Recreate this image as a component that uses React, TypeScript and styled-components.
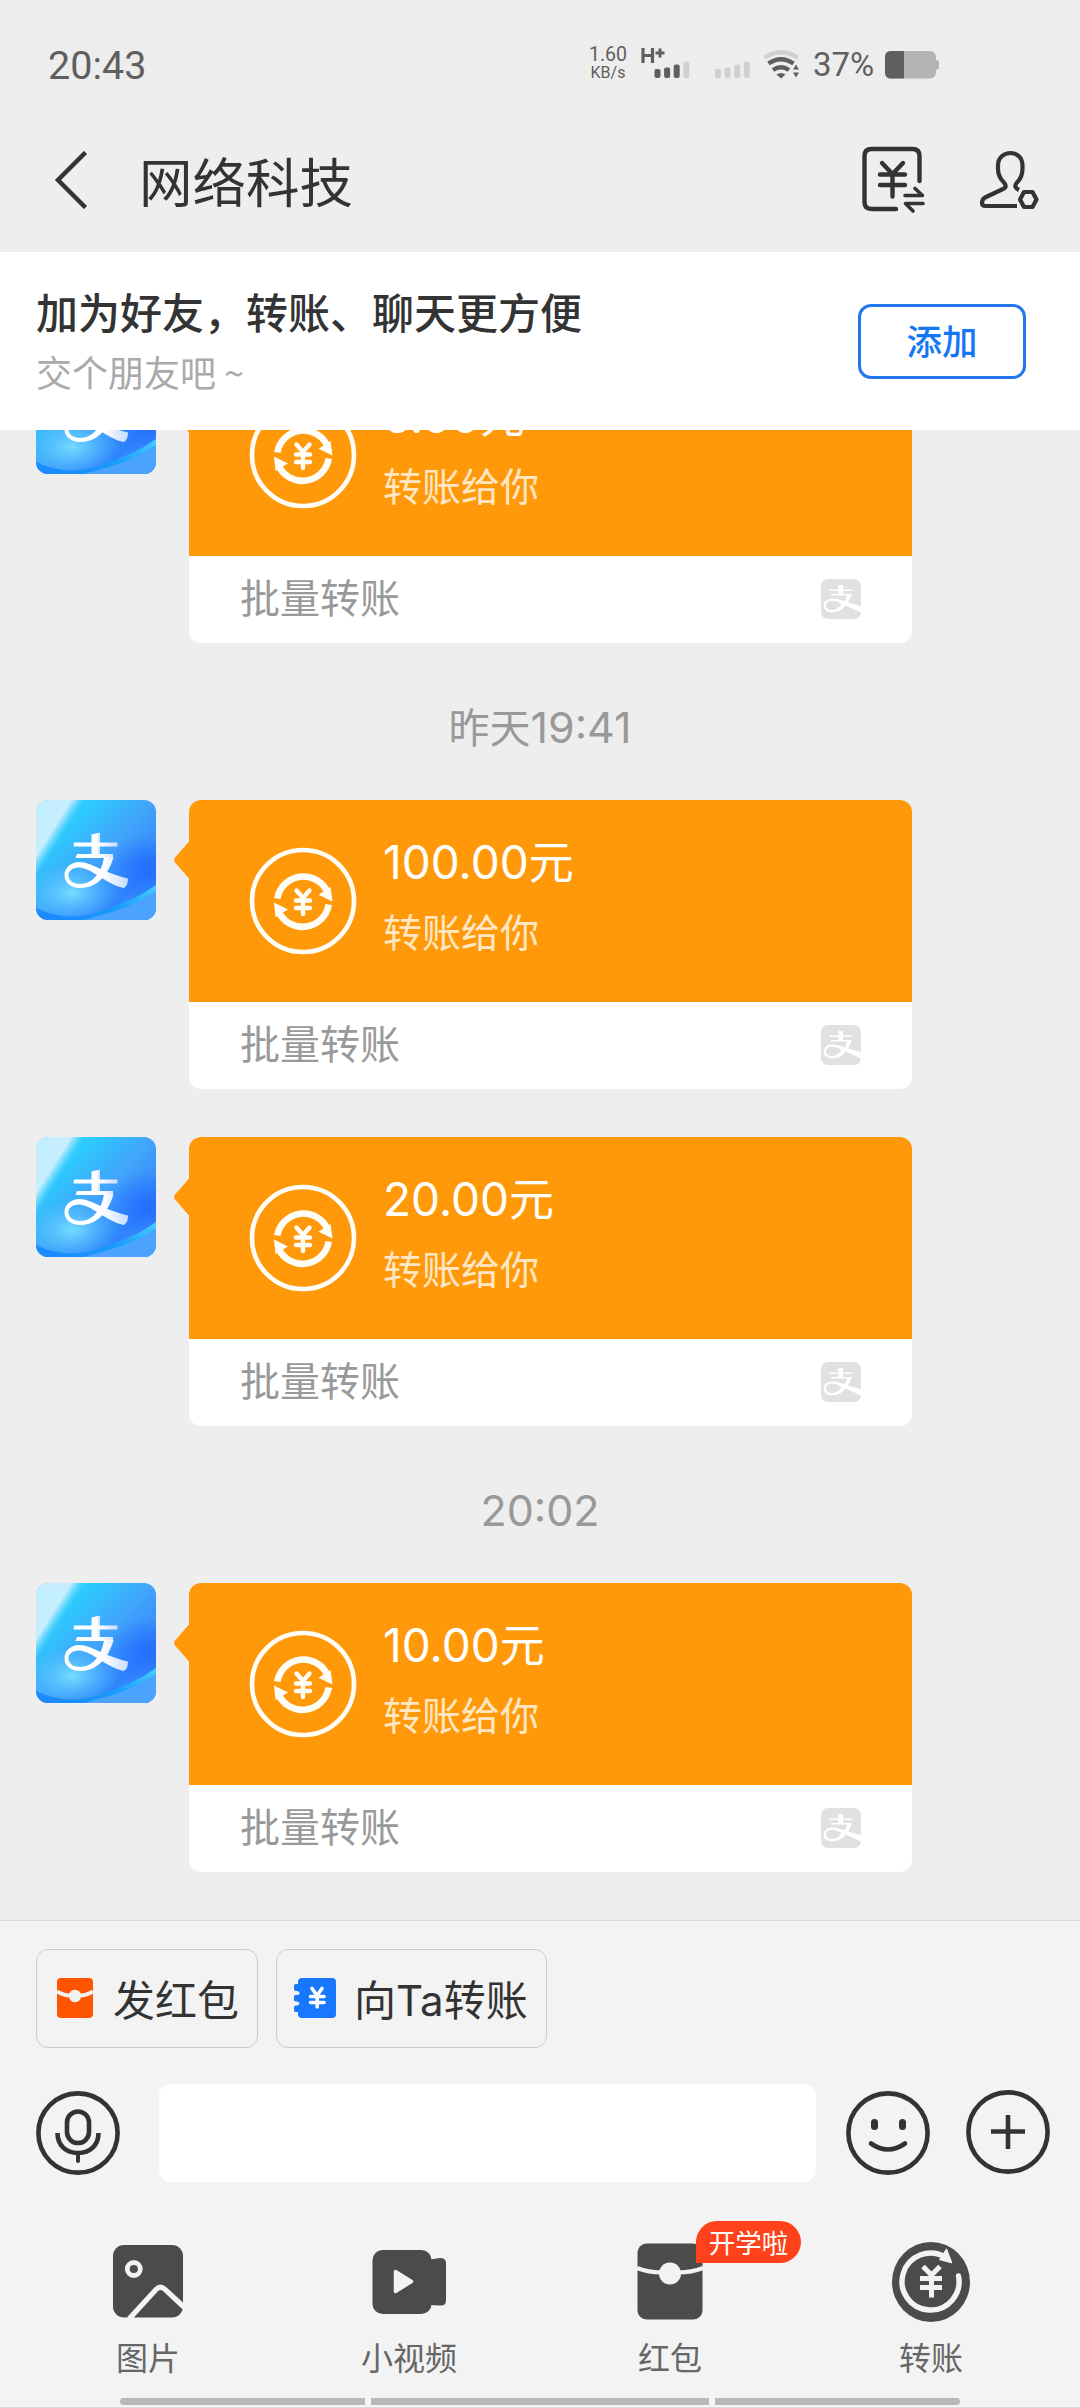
import React from "react";
import styled, { createGlobalStyle } from "styled-components";

const GlobalStyle = createGlobalStyle`
  *, *::before, *::after { box-sizing: border-box; }
  html, body { margin: 0; padding: 0; background: #eeeeee; }
  body { font-family: "Noto Sans CJK SC", "Noto Sans", sans-serif; color: #333333; }
  svg { display: block; flex: none; }
`;

const Screen = styled.div`
  width: 1080px;
  height: 2408px;
  display: flex;
  flex-direction: column;
  overflow: hidden;
  background: #eeeeee;
`;

/* Latin letters and figures set beside Chinese text */
const Latin = styled.span`
  font-family: Inter, sans-serif;
  line-height: 1;
`;

/* ---------- status bar ---------- */

const StatusBar = styled.header`
  height: 108px;
  flex: none;
  display: flex;
  align-items: flex-start;
  padding: 44px 141px 0 48px;
  color: #5f5f5f;
  background: #ededed;
`;

const Clock = styled.span`
  flex: 1;
  font: 400 39.5px/43px Roboto, sans-serif;
`;

const NetSpeed = styled.div`
  display: flex;
  flex-direction: column;
  align-items: center;
  width: 40px;
  margin-right: 13px;
  padding-top: 2px;
  font: 400 19.5px/18px Roboto, sans-serif;
`;

const SpeedUnit = styled.span`
  font-size: 16px;
  line-height: 17px;
`;

const NetType = styled.div`
  display: flex;
  align-items: flex-start;
  width: 50px;
  height: 36px;
  margin-right: 24px;
`;

const WifiSlot = styled.div`
  margin-left: 12px;
`;

const Percent = styled.span`
  width: 64px;
  margin: 0 8px 0 13px;
  font: 400 33px/42px Roboto, sans-serif;
  white-space: nowrap;
`;

/* ---------- title bar ---------- */

const TitleBar = styled.div`
  height: 144px;
  flex: none;
  display: flex;
  align-items: center;
  padding: 0 41px 0 53px;
`;

const Title = styled.h1`
  flex: 1;
  margin: 0 0 0 50px;
  font-size: 53.5px;
  line-height: 72px;
  font-weight: 400;
`;

const HeadActions = styled.div`
  display: flex;
  align-items: center;
  gap: 53px;
`;

/* ---------- friend notice ---------- */

const Notice = styled.section`
  height: 178px;
  flex: none;
  display: flex;
  align-items: center;
  justify-content: space-between;
  padding: 0 54px 0 36px;
  background: #ffffff;
`;

const NoticeText = styled.div`
  display: flex;
  flex-direction: column;
  padding-bottom: 2px;
`;

const NoticeTitle = styled.strong`
  font-size: 42px;
  line-height: 62px;
  font-weight: 500;
`;

const NoticeSub = styled.span`
  font-size: 36px;
  line-height: 58px;
  color: #aaaaaa;
`;

const AddButton = styled.button`
  width: 168px;
  height: 75px;
  padding: 0 0 3px;
  border: 3px solid #2277ee;
  border-radius: 13px;
  background: #ffffff;
  color: #1677f5;
  font: 500 35.5px/60px "Noto Sans CJK SC", sans-serif;
`;

/* ---------- chat ---------- */

const Chat = styled.main`
  flex: 1;
  min-height: 0;
  display: flex;
  flex-direction: column;
  justify-content: flex-end;
  overflow: hidden;
  padding: 0 168px 48px 36px;
`;

const Stamp = styled.time`
  flex: none;
  height: 157px;
  margin-right: -132px;
  padding-bottom: 1px;
  text-align: center;
  font-size: 41px;
  line-height: 164px;
  color: #999999;

  ${Latin} {
    font-size: 43px;
  }
`;

const Message = styled.article<{ $spaced?: boolean }>`
  flex: none;
  display: flex;
  align-items: flex-start;
  margin-top: ${(p) => (p.$spaced ? 48 : 0)}px;
`;

const Avatar = styled.div`
  width: 120px;
  height: 120px;
  flex: none;
  border-radius: 12px;
  overflow: hidden;
`;

const Pointer = styled.div`
  width: 15px;
  margin: 41px 0 0 18px;
  flex: none;
`;

const Card = styled.div`
  width: 723px;
  border-radius: 12px;
  overflow: hidden;
  background: #ffffff;
`;

const CardMain = styled.div`
  height: 202px;
  display: flex;
  align-items: flex-start;
  padding: 26px 0 0 60px;
  background: #ff990a;
`;

const CoinSlot = styled.div`
  padding-top: 21px;
`;

const CardText = styled.div`
  display: flex;
  flex-direction: column;
  gap: 9px;
  margin-left: 26px;
  color: #ffffff;
`;

const Amount = styled.span`
  padding-top: 1px;
  font-size: 45px;
  line-height: 66px;

  ${Latin} {
    font-size: 46px;
  }
`;

const Direction = styled.span`
  font-size: 39px;
  line-height: 56px;
  color: #ffe7c4;
`;

const CardFoot = styled.div`
  height: 87px;
  display: flex;
  align-items: center;
  justify-content: space-between;
  padding: 0 51px 1px;
`;

const FootLabel = styled.span`
  padding-bottom: 6px;
  font-size: 40px;
  line-height: 60px;
  color: #999999;
`;

/* ---------- bottom panel ---------- */

const Panel = styled.footer`
  height: 488px;
  flex: none;
  display: flex;
  flex-direction: column;
  border-top: 1px solid #d9d9d9;
  border-bottom: 1px solid #dddddd;
  background: #f3f3f3;
`;

const Chips = styled.div`
  display: flex;
  gap: 18px;
  padding: 28px 36px 0;
`;

const Chip = styled.button<{ $width: number; $left: number; $gap: number }>`
  width: ${(p) => p.$width}px;
  height: 99px;
  display: flex;
  align-items: center;
  gap: ${(p) => p.$gap}px;
  padding: 0 0 1px ${(p) => p.$left}px;
  border: 1px solid #cccccc;
  border-radius: 12px;
  background: transparent;
  color: #333333;
  font: 400 42px/60px "Noto Sans CJK SC", sans-serif;
  white-space: nowrap;
`;

const InputRow = styled.div`
  display: flex;
  align-items: center;
  height: 98px;
  margin-top: 36px;
  padding: 0 30px 0 36px;
`;

const Field = styled.div`
  width: 657px;
  height: 98px;
  margin: 0 30px 0 39px;
  border-radius: 12px;
  background: #ffffff;
`;

const PlusSlot = styled.div`
  margin: -2px 0 0 36px;
`;

const Tools = styled.nav`
  display: grid;
  grid-template-columns: repeat(4, 261px);
  justify-content: center;
  margin: 58px 1px 0 0;
`;

const Tool = styled.div`
  display: flex;
  flex-direction: column;
  align-items: center;
`;

const ToolIcon = styled.div`
  position: relative;
  width: 82px;
  height: 82px;
`;

const ToolLabel = styled.span`
  margin-top: 10px;
  font-size: 32px;
  line-height: 48px;
  color: #666666;
`;

const Badge = styled.span`
  position: absolute;
  left: 67px;
  top: -19px;
  width: 105px;
  height: 42px;
  border-radius: 21px 21px 21px 0;
  background: #ff411c;
  color: #ffffff;
  font-size: 26.5px;
  line-height: 41px;
  text-align: center;
  white-space: nowrap;
`;

const HomeBar = styled.div`
  display: grid;
  grid-template-columns: 245px 338px 245px;
  gap: 6px;
  margin: auto 120px 2px;
  height: 7px;
`;

const HomeSegment = styled.i<{ $radius?: string }>`
  background: #b8b8b8;
  border-radius: ${(p) => p.$radius ?? "0"};
`;

/* ---------- drawings ---------- */

const SignalBars = ({ filled, x = 0 }: { filled: number; x?: number }) => (
  <g>
    {[9, 10.5, 13.5, 16.5].map((h, i) => (
      <rect key={h} x={x + i * 9.6} y={34 - h} width="6" height={h} rx="2" fill={i < filled ? "#5f5f5f" : "#d0d0d0"} />
    ))}
  </g>
);

const NetSignal = () => (
  <svg width="50" height="36" viewBox="0 0 50 36">
    <path d="M2 4v15M11.500 4v15M2 11.500h10" stroke="#5f5f5f" strokeWidth="3.200" fill="none" />
    <path d="M19 4.500v9M14.500 9h9" stroke="#5f5f5f" strokeWidth="3" fill="none" />
    <SignalBars filled={3} x={13.5} />
  </svg>
);

const NoSignal = () => (
  <svg width="36" height="36" viewBox="0 0 36 36">
    <SignalBars filled={0} />
  </svg>
);

const Wifi = () => (
  <svg width="37" height="36" viewBox="0 0 37 36" fill="none">
    <path d="M1.500 13.500Q18 3 34.500 13.500" stroke="#d0d0d0" strokeWidth="4.400" />
    <path d="M5.500 19.500Q18 11 30.500 19.500" stroke="#5f5f5f" strokeWidth="4.400" />
    <path d="M10 26Q18 20.500 26 26" stroke="#5f5f5f" strokeWidth="4.400" />
    <path d="M13.500 30.500Q18 27.500 22.500 30.500L18 34.500Z" fill="#5f5f5f" />
    <path d="M33 20.500l3 5h-6zM33 33.500l3-5h-6z" fill="#5f5f5f" />
  </svg>
);

const Battery = () => (
  <svg width="54" height="36" viewBox="0 0 54 36">
    <rect x="0" y="7" width="51" height="27.500" rx="6" fill="#b4b4b4" />
    <path d="M51 16h1q2 0 2 2.500v4.500q0 2.500-2 2.500h-1z" fill="#b4b4b4" />
    <path d="M19 7H6Q0 7 0 13v15.500q0 6 6 6h13z" fill="#5f5f5f" />
  </svg>
);

const BackIcon = () => (
  <svg width="36" height="58" viewBox="0 0 36 58" fill="none">
    <path d="M32.500 1.500L5 29L32.500 56.500" stroke="#333" strokeWidth="4.500" />
  </svg>
);

const BillIcon = () => (
  <svg width="64" height="68" viewBox="0 0 64 68" fill="none" stroke="#333" strokeWidth="4.400" strokeLinecap="round" strokeLinejoin="round">
    <path d="M57.500 35V10Q57.500 3 50.500 3H9.500Q2.500 3 2.500 10V56Q2.500 63 9.500 63H34" />
    <path d="M20 17L30.500 28L41 17M18 28.500H43M18 39H43M30.500 28V50.500" />
    <path d="M43 49.500H60.500L53 42.500M61 57.500H43.500L51 65" strokeWidth="3.600" />
  </svg>
);

const ProfileIcon = () => (
  <svg width="60" height="60" viewBox="0 0 60 60" fill="none" stroke="#333" strokeWidth="4.200" strokeLinejoin="round">
    <path d="M40 40C36 38 35 35.500 38 32.500C42 28.500 43.500 24 43.500 19V15.500C43.500 7.500 38 3 31.500 3S19 7.500 19 15.500V19C19 25 20.500 28 24.500 32C27.500 35 27.500 37.500 24 39L6 47.500C3.500 49 3 51 3 53C3 55 4.500 56 6.500 56H38" />
    <path d="M45.500 43.500h8.500l4 7.500l-4 7.500h-8.500l-4-7.500z" transform="translate(-.5 -1.500)" />
  </svg>
);

const AlipayStrokes = () => (
  <>
    <path d="M55.500 34.500Q60 33.500 64 32.500V57H55.500Z" />
    <path d="M38 42.500H81.500V46.500H37.500ZM41 54H77V58H39.500Z" />
    <path d="M68 57H77.500C75 67 66 88 44.500 88C34 88 28.500 82 28.500 75.500C28.500 67.500 35 62 43.500 62C55 62 69 73.500 92 78.500C92 83 91 86 88 88C71 85 56 68 43 67.500C36.500 67.500 32 71 32.500 76C33 81 38 84 44 84C57.500 84 66 71 68 57Z" />
  </>
);

const AvatarArt = () => (
  <svg width="120" height="120" viewBox="0 0 120 120">
    <defs>
      <linearGradient id="sky" x1="0" y1="0" x2="1" y2="1">
        <stop offset="0" stopColor="#4fd2ff" />
        <stop offset=".24" stopColor="#2ccafd" />
        <stop offset=".5" stopColor="#42a4fb" />
        <stop offset=".76" stopColor="#2f84fc" />
        <stop offset="1" stopColor="#4ba6fd" />
      </linearGradient>
      <linearGradient id="ray" gradientUnits="userSpaceOnUse" x1="0" y1="0" x2="35" y2="22">
        <stop offset="0" stopColor="#c2eeff" />
        <stop offset=".72" stopColor="#c6efff" />
        <stop offset="1" stopColor="#7fdcff" stopOpacity="0" />
      </linearGradient>
      <radialGradient id="deep">
        <stop offset="0" stopColor="#256dff" />
        <stop offset="1" stopColor="#256dff" stopOpacity="0" />
      </radialGradient>
      <radialGradient id="glow">
        <stop offset="0" stopColor="#74dcff" />
        <stop offset="1" stopColor="#54c4ff" stopOpacity="0" />
      </radialGradient>
      <linearGradient id="wave" x1="0" y1="1" x2="1" y2="0">
        <stop offset="0" stopColor="#1b87ff" />
        <stop offset=".5" stopColor="#169dfa" />
        <stop offset="1" stopColor="#4bcfff" />
      </linearGradient>
      <linearGradient id="mark" x1="0" y1="0" x2="1" y2="0">
        <stop offset=".6" stopColor="#fff" />
        <stop offset="1" stopColor="#c7dcff" />
      </linearGradient>
    </defs>
    <rect width="120" height="120" fill="url(#sky)" />
    <rect width="60" height="90" fill="url(#ray)" />
    <ellipse cx="112" cy="70" rx="42" ry="34" fill="url(#deep)" />
    <ellipse cx="36" cy="93" rx="46" ry="30" fill="url(#glow)" />
    <path d="M0 108Q34 124 68 110Q98 101 120 85V120H0Z" fill="url(#wave)" />
    <path d="M58 117Q98 107 120 91V120H48Z" fill="#4ba3ff" />
    <g fill="url(#mark)">
      <AlipayStrokes />
    </g>
  </svg>
);

const AlipayBadge = () => (
  <svg width="40" height="40" viewBox="0 0 40 40">
    <rect width="40" height="40" rx="7" fill="#e1e1e1" />
    <g fill="#fff">
      <path d="M17.300 6H22V15.500H17.300ZM8 10.500H31.700V12H8ZM10 15H30.500V16.600H10Z" />
      <path d="M26.500 15.500H30.500C29.500 18.500 28.500 21 27 23.500L40 27.300V33.500L24.500 26.500C21 31 17 33.300 11.500 33.300C6 33.300 2.700 30.500 2.700 26.500C2.700 22.500 6 19.500 11.500 19.500C15.500 19.500 19 20.800 23.500 22.300C25 20.300 26 18 26.500 15.500ZM20.500 25C17 23 14 21.800 11 21.800C7 21.800 5 24 5 26.500C5 29.500 7.500 31 11 31C15 31 18 28.500 20.500 25Z" />
    </g>
  </svg>
);

const CoinIcon = () => (
  <svg width="108" height="108" viewBox="0 0 108 108" fill="none" stroke="#fffdf8">
    <circle cx="54" cy="54" r="51" strokeWidth="4.600" />
    <path d="M28.300 51.500A26.500 26.500 0 0 1 78.500 45" strokeWidth="6.600" />
    <path d="M79.700 57.500A26.500 26.500 0 0 1 29.500 64.500" strokeWidth="6.600" />
    <path d="M81.500 40L83.500 54.500L69.500 47.800Z" fill="#fffdf8" stroke="none" />
    <path d="M26.500 70L25 55.500L39 62.500Z" fill="#fffdf8" stroke="none" />
    <path d="M47.500 43.500L54 51L60.500 43.500M47 53.500H61M47 61H61M54 52V67" strokeWidth="4.400" strokeLinecap="round" />
  </svg>
);

const PointerArt = () => (
  <svg width="15" height="38" viewBox="0 0 15 38">
    <path d="M15 0.500V37.500L1 21.500Q-.6 19 1 16.500Z" fill="#ff990a" />
  </svg>
);

const RedChipIcon = () => (
  <svg width="36" height="40" viewBox="0 0 36 40">
    <rect width="36" height="40" rx="4" fill="#ff5500" />
    <path d="M0 13.500Q6 17.500 13 17.500M36 13.500Q30 17.500 23 17.500" stroke="#f3f3f3" strokeWidth="4" fill="none" />
    <circle cx="18" cy="18" r="6.200" fill="#f3f3f3" />
  </svg>
);

const BlueChipIcon = () => (
  <svg width="42" height="40" viewBox="0 0 42 40">
    <rect x="4" width="38" height="40" rx="4" fill="#1777ff" />
    <path d="M4 6H1.500Q0 6 0 8V11Q0 13 1.500 13H4ZM4 17H1.500Q0 17 0 19V21.500Q0 23.500 1.500 23.500H4ZM4 27.500H1.500Q0 27.500 0 29.500V32Q0 34 1.500 34H4Z" fill="#1777ff" />
    <path d="M4 14Q5.500 15 4 16.500M4 24.500Q5.500 25.500 4 26.500" stroke="#f3f3f3" strokeWidth="1.500" fill="none" />
    <path d="M18 10.500L23 17.500L28 10.500M16.500 18.500H30M16.500 24.500H30M23.200 18V29" stroke="#fff" strokeWidth="3.600" strokeLinecap="round" fill="none" />
  </svg>
);

const MicIcon = () => (
  <svg width="84" height="84" viewBox="0 0 84 84" fill="none" stroke="#333" strokeWidth="4.600">
    <circle cx="42" cy="42" r="39.600" />
    <rect x="31" y="20.500" width="22" height="31.500" rx="11" />
    <path d="M21.500 42C21.500 54.500 30 62 42 62S62.500 54.500 62.500 42" />
    <path d="M42 62V70" strokeLinecap="round" strokeWidth="4" />
  </svg>
);

const SmileIcon = () => (
  <svg width="84" height="84" viewBox="0 0 84 84" fill="none" stroke="#333" strokeWidth="4.600">
    <circle cx="42" cy="42" r="39.600" />
    <path d="M28.500 31.500V35.500M56.500 31.500V35.500" strokeWidth="7" strokeLinecap="round" />
    <path d="M25 52.500Q42 64.500 59 52.500" strokeLinecap="round" />
  </svg>
);

const PlusIcon = () => (
  <svg width="84" height="84" viewBox="0 0 84 84" fill="none" stroke="#333" strokeWidth="4.600">
    <circle cx="42" cy="42" r="39.600" />
    <path d="M42 25V59M25 41.500H59" />
  </svg>
);

const ink = "#4b4b4b";
const cut = "#f3f3f3";

const PictureIcon = () => (
  <svg width="82" height="82" viewBox="0 0 82 82">
    <rect x="6" y="5" width="70" height="72.500" rx="11" fill={ink} />
    <circle cx="26.800" cy="29" r="6.500" fill="none" stroke={cut} strokeWidth="4.800" />
    <path d="M22 79L49 49.500Q53.500 45 58 49.500L78 68" fill="none" stroke={cut} strokeWidth="5.200" />
  </svg>
);

const VideoIcon = () => (
  <svg width="82" height="82" viewBox="0 0 82 82">
    <rect x="4.500" y="10" width="59" height="64" rx="10" fill={ink} />
    <path d="M62 19.500L72 18Q78 18 78 23V60.500Q78 66 72 65.500L62 65Z" fill={ink} />
    <path d="M27.500 31.500L43.500 41.500L27.500 51.500Z" fill={cut} stroke={cut} strokeWidth="3.500" strokeLinejoin="round" />
  </svg>
);

const PacketIcon = () => (
  <svg width="82" height="82" viewBox="0 0 82 82">
    <rect x="8.500" y="3.500" width="65" height="76" rx="9" fill={ink} />
    <path d="M8 28Q20 32.500 32 32.500H50Q62 32.500 74 28" fill="none" stroke={cut} strokeWidth="4.200" />
    <circle cx="41" cy="33.500" r="11" fill={cut} />
  </svg>
);

const TransferIcon = () => (
  <svg width="82" height="82" viewBox="0 0 82 82">
    <ellipse cx="41" cy="42" rx="39" ry="40" fill={ink} />
    <path d="M68.500 36A28.500 28.500 0 1 1 55 17" fill="none" stroke={cut} strokeWidth="5.400" strokeLinecap="round" />
    <path d="M56.500 9.500L61.500 22.500L50 19.500Z" fill={cut} stroke={cut} strokeWidth="1.500" strokeLinejoin="round" />
    <path d="M33 26.500L41.500 35L50 26.500M30 38.500H52M30 47.500H52M41.500 35V57.500" fill="none" stroke={cut} strokeWidth="5" />
  </svg>
);

/* ---------- composition ---------- */

const TransferMessage = ({ amount, spaced }: { amount: string; spaced?: boolean }) => (
  <Message $spaced={spaced}>
    <Avatar>
      <AvatarArt />
    </Avatar>
    <Pointer>
      <PointerArt />
    </Pointer>
    <Card>
      <CardMain>
        <CoinSlot>
          <CoinIcon />
        </CoinSlot>
        <CardText>
          <Amount>
            <Latin>{amount}</Latin>元
          </Amount>
          <Direction>转账给你</Direction>
        </CardText>
      </CardMain>
      <CardFoot>
        <FootLabel>批量转账</FootLabel>
        <AlipayBadge />
      </CardFoot>
    </Card>
  </Message>
);

const tools = [
  { label: "图片", Icon: PictureIcon },
  { label: "小视频", Icon: VideoIcon },
  { label: "红包", Icon: PacketIcon, badge: "开学啦" },
  { label: "转账", Icon: TransferIcon },
];

export default function App() {
  return (
    <Screen>
      <GlobalStyle />
      <StatusBar>
        <Clock>20:43</Clock>
        <NetSpeed>
          1.60
          <SpeedUnit>KB/s</SpeedUnit>
        </NetSpeed>
        <NetType>
          <NetSignal />
        </NetType>
        <NoSignal />
        <WifiSlot>
          <Wifi />
        </WifiSlot>
        <Percent>37%</Percent>
        <Battery />
      </StatusBar>

      <TitleBar>
        <BackIcon />
        <Title>网络科技</Title>
        <HeadActions>
          <BillIcon />
          <ProfileIcon />
        </HeadActions>
      </TitleBar>

      <Notice>
        <NoticeText>
          <NoticeTitle>加为好友，转账、聊天更方便</NoticeTitle>
          <NoticeSub>交个朋友吧 ~</NoticeSub>
        </NoticeText>
        <AddButton>添加</AddButton>
      </Notice>

      <Chat>
        <TransferMessage amount="6.00" />
        <Stamp>
          昨天<Latin>19:41</Latin>
        </Stamp>
        <TransferMessage amount="100.00" />
        <TransferMessage amount="20.00" spaced />
        <Stamp>
          <Latin>20:02</Latin>
        </Stamp>
        <TransferMessage amount="10.00" />
      </Chat>

      <Panel>
        <Chips>
          <Chip $width={222} $left={20} $gap={20}>
            <RedChipIcon />
            发红包
          </Chip>
          <Chip $width={271} $left={17} $gap={18}>
            <BlueChipIcon />
            <span>
              向<Latin>Ta</Latin>转账
            </span>
          </Chip>
        </Chips>
        <InputRow>
          <MicIcon />
          <Field />
          <SmileIcon />
          <PlusSlot>
            <PlusIcon />
          </PlusSlot>
        </InputRow>
        <Tools>
          {tools.map(({ label, Icon, badge }) => (
            <Tool key={label}>
              <ToolIcon>
                <Icon />
                {badge && <Badge>{badge}</Badge>}
              </ToolIcon>
              <ToolLabel>{label}</ToolLabel>
            </Tool>
          ))}
        </Tools>
        <HomeBar>
          <HomeSegment $radius="4px 0 0 4px" />
          <HomeSegment />
          <HomeSegment $radius="0 4px 4px 0" />
        </HomeBar>
      </Panel>
    </Screen>
  );
}
